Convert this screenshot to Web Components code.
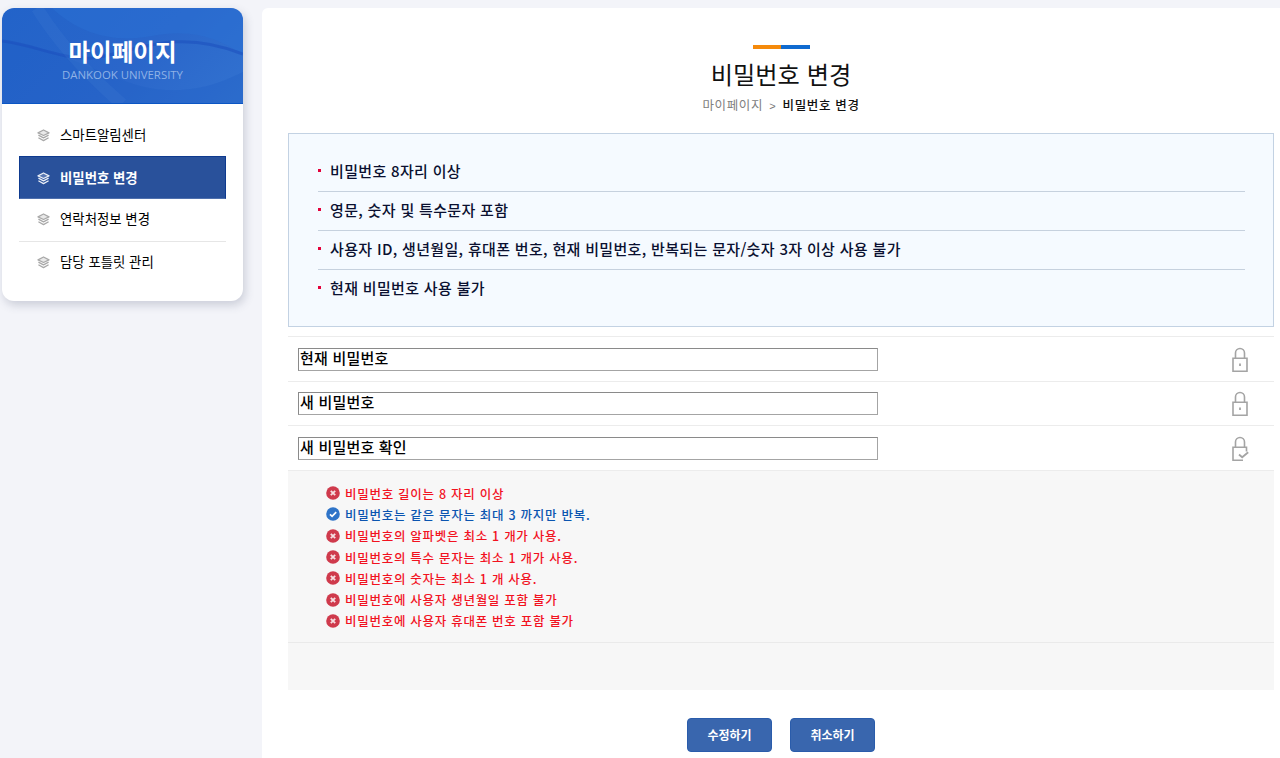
<!DOCTYPE html>
<html lang="ko">
<head>
<meta charset="utf-8">
<title>비밀번호 변경</title>
<style>
  html, body { margin: 0; height: 758px; overflow: hidden; background: #f3f4f9; }
  body { font-family: "Noto Sans CJK KR", "Noto Sans", sans-serif; }
</style>
</head>
<body>
<my-page>
  <side-nav slot="side" title-text="마이페이지" sub-text="DANKOOK UNIVERSITY">
    <nav-item>스마트알림센터</nav-item>
    <nav-item active>비밀번호 변경</nav-item>
    <nav-item underline>연락처정보 변경</nav-item>
    <nav-item>담당 포틀릿 관리</nav-item>
  </side-nav>
  <page-title heading="비밀번호 변경" root="마이페이지"></page-title>
  <info-box>
    <info-line>비밀번호 8자리 이상</info-line>
    <info-line>영문, 숫자 및 특수문자 포함</info-line>
    <info-line>사용자 ID, 생년월일, 휴대폰 번호, 현재 비밀번호, 반복되는 문자/숫자 3자 이상 사용 불가</info-line>
    <info-line>현재 비밀번호 사용 불가</info-line>
  </info-box>
  <pw-field>현재 비밀번호</pw-field>
  <pw-field>새 비밀번호</pw-field>
  <pw-field check>새 비밀번호 확인</pw-field>
  <rule-panel>
    <rule-item>비밀번호 길이는 8 자리 이상</rule-item>
    <rule-item ok>비밀번호는 같은 문자는 최대 3 까지만 반복.</rule-item>
    <rule-item>비밀번호의 알파벳은 최소 1 개가 사용.</rule-item>
    <rule-item>비밀번호의 특수 문자는 최소 1 개가 사용.</rule-item>
    <rule-item>비밀번호의 숫자는 최소 1 개 사용.</rule-item>
    <rule-item>비밀번호에 사용자 생년월일 포함 불가</rule-item>
    <rule-item>비밀번호에 사용자 휴대폰 번호 포함 불가</rule-item>
  </rule-panel>
  <form-actions>
    <action-button>수정하기</action-button>
    <action-button>취소하기</action-button>
  </form-actions>
</my-page>

<script>
class MyPage extends HTMLElement {
  constructor() {
    super();
    this.attachShadow({ mode: 'open' });
    this.shadowRoot.innerHTML = `
      <style>
        :host { display: flex; align-items: flex-start; padding: 8px 0 0 2px; gap: 19px; height: 750px; overflow: hidden; }
        .side { flex: 0 0 241px; }
        main {
          flex: 1; height: 750px; background: #fff; border-radius: 6px 0 0 0;
          padding: 37px 6px 0 26px; box-sizing: border-box; min-width: 0;
        }
      </style>
      <div class="side"><slot name="side"></slot></div>
      <main><slot></slot></main>
    `;
  }
}

class SideNav extends HTMLElement {
  constructor() {
    super();
    this.attachShadow({ mode: 'open' });
    this.shadowRoot.innerHTML = `
      <style>
        :host {
          display: block; height: 293px; background: #fff; border-radius: 12px;
          box-shadow: 2px 4px 10px rgba(60, 70, 100, .22); overflow: hidden;
        }
        header {
          position: relative; height: 96px; box-sizing: border-box; overflow: hidden;
          border-bottom: 1px solid #0b56c4; color: #fff; text-align: center;
          background: linear-gradient(135deg, #2263c9 0%, #2a66ca 55%, #3272d0 100%);
        }
        header svg { position: absolute; left: 0; top: 0; }
        h1 {
          position: relative; margin: 0; padding-top: 28px;
          font-size: 23.5px; line-height: 30px; font-weight: 700;
        }
        p {
          position: relative; margin: 1px 0 0; font-size: 11.4px; line-height: 15px;
          font-family: "Open Sans", "Noto Sans", sans-serif; color: #8fb2e6;
        }
        nav { padding: 10px 17px 0; }
      </style>
      <header>
        <svg width="241" height="96" viewBox="0 0 241 96">
          <path d="M50 0C75 24 110 36 150 28C190 20 215 30 241 46V0Z" fill="#2a6fd4" opacity=".5"/>
          <path d="M0 33C45 38 75 55 120 72C150 84 190 90 241 64V96H0Z" fill="#1f5cc4" opacity=".3"/>
          <path d="M0 33C30 36 60 52 90 50C130 46 170 18 241 46" fill="none" stroke="#1b4fbd" stroke-width="3" opacity=".55"/>
          <path d="M35 0C60 40 90 70 120 96" fill="none" stroke="#5c93e2" stroke-width="12" opacity=".12"/>
        </svg>
        <h1>${this.getAttribute('title-text')}</h1>
        <p>${this.getAttribute('sub-text')}</p>
      </header>
      <nav><slot></slot></nav>
    `;
  }
}

class NavItem extends HTMLElement {
  constructor() {
    super();
    this.attachShadow({ mode: 'open' });
    this.shadowRoot.innerHTML = `
      <style>
        :host {
          display: flex; align-items: center; gap: 10px; height: 42px; box-sizing: border-box;
          padding: 0 0 3px 18px; font-size: 13.4px; font-weight: 400; color: #000;
        }
        :host(:last-child) { padding-bottom: 5px; }
        :host([active]) {
          width: 207px; height: 43px; background: #29519b; color: #fff; font-weight: 700;
          border: 1px solid #0e3a8f; border-bottom-color: #4f70ad; padding: 0 0 1px 17px;
        }
        :host([underline]) { border-bottom: 1px solid #e6e6e6; height: 43px; padding-bottom: 4px; }
        svg { flex: none; color: #a9a9a9; margin-top: 3px; }
        :host([active]) svg { color: #e8edf6; }
      </style>
      <svg width="13" height="13" viewBox="0 0 13 13" fill="none" stroke="currentColor" stroke-width="1.3" stroke-linejoin="round">
        <path d="M6.5 1 12 3.8 6.5 6.5 1 3.8Z" fill="currentColor" fill-opacity=".25"/>
        <path d="M1.4 6.2 6.5 8.8 11.6 6.2"/>
        <path d="M1.4 8.8 6.5 11.6 11.6 8.8"/>
      </svg>
      <span><slot></slot></span>
    `;
  }
}

class PageTitle extends HTMLElement {
  constructor() {
    super();
    this.attachShadow({ mode: 'open' });
    this.shadowRoot.innerHTML = `
      <style>
        :host { display: flex; flex-direction: column; align-items: center; height: 88px; color: #111; }
        .bar { width: 57px; height: 4px; background: linear-gradient(90deg, #f58a0b 50%, #0f6bd0 50%); }
        h2 { margin: 6px 0 0; font-size: 24.2px; line-height: 37px; font-weight: 400; }
        .crumb { font-size: 12.5px; line-height: 18px; letter-spacing: .65px; margin-top: 4px; font-weight: 500; }
        .root { color: #808080; font-weight: 400; }
        .sep { color: #777; margin: 0 2px; font-size: 11px; font-family: "Liberation Sans", sans-serif; }
      </style>
      <div class="bar"></div>
      <h2>${this.getAttribute('heading')}</h2>
      <div class="crumb"><span class="root">${this.getAttribute('root')}</span> <span class="sep">&gt;</span> ${this.getAttribute('heading')}</div>
    `;
  }
}

class InfoBox extends HTMLElement {
  constructor() {
    super();
    this.attachShadow({ mode: 'open' });
    this.shadowRoot.innerHTML = `
      <style>
        :host {
          display: block; height: 194px; box-sizing: border-box; padding: 19px 28px 0 29px;
          background: #f5faff; border: 1px solid #c3d2e3; margin-bottom: 9px;
        }
      </style>
      <slot></slot>
    `;
  }
}

class InfoLine extends HTMLElement {
  constructor() {
    super();
    this.attachShadow({ mode: 'open' });
    this.shadowRoot.innerHTML = `
      <style>
        :host {
          display: flex; align-items: center; height: 39px; box-sizing: border-box;
          border-bottom: 1px solid #c6d1de; font-size: 15px; font-weight: 500;
          color: #0a1030; letter-spacing: .33px; padding-bottom: 4px;
        }
        :host(:last-child) { border-bottom: 0; }
        i { width: 3px; height: 3px; background: #e4003a; margin-right: 9px; flex: none; }
      </style>
      <i></i><span><slot></slot></span>
    `;
  }
}

class PwField extends HTMLElement {
  constructor() {
    super();
    this.attachShadow({ mode: 'open' });
    const body = this.hasAttribute('check')
      ? '<path d="M15.5 15.5V11.2H2v13.1h10"/><path d="M8 18.5l3.2 2.8 6-5" stroke-width="1.8"/>'
      : '<path d="M2 11.2h14v13.1H2z"/><path d="M9 16.5v2.5" stroke-width="1.8"/>';
    this.shadowRoot.innerHTML = `
      <style>
        :host {
          display: flex; align-items: center; justify-content: space-between; height: 44.5px;
          box-sizing: border-box; padding: 0 25px 0 10px; border-top: 1px solid #ececec;
        }
        .input {
          width: 580px; height: 23px; box-sizing: border-box; padding-left: 1px; margin-top: 1px;
          border: 1px solid #a4a4a4; border-top-color: #8a8a8a; border-left-color: #8a8a8a;
          background: #fff; font: 500 15px/17px "Noto Sans CJK KR", sans-serif; color: #000; letter-spacing: .2px;
        }
        svg { margin-top: 2px; }
      </style>
      <div class="input"><slot></slot></div>
      <svg width="18" height="26" viewBox="0 0 18 26" fill="none" stroke="#a4a4a4" stroke-width="1.6">
        <path d="M4.5 11V6a4.5 4.5 0 0 1 9 0v5"/>
        ${body}
      </svg>
    `;
  }
}

class RulePanel extends HTMLElement {
  constructor() {
    super();
    this.attachShadow({ mode: 'open' });
    this.shadowRoot.innerHTML = `
      <style>
        :host {
          display: block; height: 220px; box-sizing: border-box; background: #f7f7f7;
          border-top: 1px solid #ececec;
        }
        .list { height: 172px; box-sizing: border-box; padding: 12px 0 0 38px; border-bottom: 1px solid #eaeaea; }
      </style>
      <div class="list"><slot></slot></div>
    `;
  }
}

class RuleItem extends HTMLElement {
  constructor() {
    super();
    this.attachShadow({ mode: 'open' });
    const ok = this.hasAttribute('ok');
    this.shadowRoot.innerHTML = `
      <style>
        :host {
          display: flex; align-items: center; gap: 5px; height: 21.3px;
          font-size: 12.5px; font-weight: 500; letter-spacing: .72px; color: #f2121f;
        }
        :host([ok]) { color: #0b55b0; }
        svg { flex: none; }
      </style>
      <svg width="14" height="14" viewBox="0 0 14 14">
        <circle cx="7" cy="7" r="6.8" fill="${ok ? '#2f74c8' : '#cf3a4c'}"/>
        ${ok
          ? '<path d="M4 7.3 6.1 9.3 10.2 5.2" fill="none" stroke="#fff" stroke-width="1.7"/>'
          : '<path d="M4.8 4.8 9.2 9.2M9.2 4.8 4.8 9.2" fill="none" stroke="#f6dfe2" stroke-width="1.8"/>'}
      </svg>
      <span><slot></slot></span>
    `;
  }
}

class FormActions extends HTMLElement {
  constructor() {
    super();
    this.attachShadow({ mode: 'open' });
    this.shadowRoot.innerHTML = `
      <style>
        :host { display: flex; justify-content: center; gap: 18px; margin-top: 28px; }
      </style>
      <slot></slot>
    `;
  }
}

class ActionButton extends HTMLElement {
  constructor() {
    super();
    this.attachShadow({ mode: 'open' });
    this.shadowRoot.innerHTML = `
      <style>
        :host {
          display: flex; align-items: center; justify-content: center; width: 85px; height: 34px;
          box-sizing: border-box; border: 1px solid #2a5cab; border-radius: 4px; background: #3966ae;
          color: #fff; font-size: 12px; font-weight: 700;
        }
      </style>
      <slot></slot>
    `;
  }
}

customElements.define('my-page', MyPage);
customElements.define('side-nav', SideNav);
customElements.define('nav-item', NavItem);
customElements.define('page-title', PageTitle);
customElements.define('info-box', InfoBox);
customElements.define('info-line', InfoLine);
customElements.define('pw-field', PwField);
customElements.define('rule-panel', RulePanel);
customElements.define('rule-item', RuleItem);
customElements.define('form-actions', FormActions);
customElements.define('action-button', ActionButton);
</script>
</body>
</html>
